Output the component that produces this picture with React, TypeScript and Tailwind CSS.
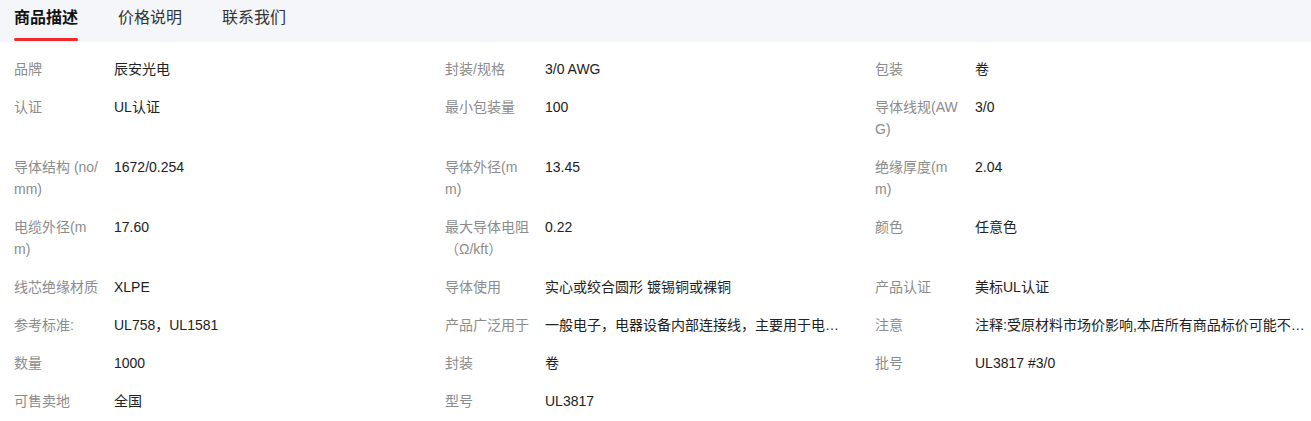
import React from "react";

type Item = { label: string; value: string };

const rows: Item[][] = [
  [
    { label: "品牌", value: "辰安光电" },
    { label: "封装/规格", value: "3/0 AWG" },
    { label: "包装", value: "卷" },
  ],
  [
    { label: "认证", value: "UL认证" },
    { label: "最小包装量", value: "100" },
    { label: "导体线规(AW\nG)", value: "3/0" },
  ],
  [
    { label: "导体结构 (no/\nmm)", value: "1672/0.254" },
    { label: "导体外径(m\nm)", value: "13.45" },
    { label: "绝缘厚度(m\nm)", value: "2.04" },
  ],
  [
    { label: "电缆外径(m\nm)", value: "17.60" },
    { label: "最大导体电阻\n（Ω/kft）", value: "0.22" },
    { label: "颜色", value: "任意色" },
  ],
  [
    { label: "线芯绝缘材质", value: "XLPE" },
    { label: "导体使用", value: "实心或绞合圆形 镀锡铜或裸铜" },
    { label: "产品认证", value: "美标UL认证" },
  ],
  [
    { label: "参考标准:", value: "UL758，UL1581" },
    { label: "产品广泛用于", value: "一般电子，电器设备内部连接线，主要用于电…" },
    { label: "注意", value: "注释:受原材料市场价影响,本店所有商品标价可能不…" },
  ],
  [
    { label: "数量", value: "1000" },
    { label: "封装", value: "卷" },
    { label: "批号", value: "UL3817 #3/0" },
  ],
  [
    { label: "可售卖地", value: "全国" },
    { label: "型号", value: "UL3817" },
  ],
];

const tabs = ["商品描述", "价格说明", "联系我们"];

export default function App() {
  return (
    <div
      className="w-[1311px] h-[421px] bg-white overflow-hidden"
      style={{ fontFamily: '"Liberation Sans", "Noto Sans CJK SC", sans-serif' }}
    >
      <div className="h-[42px] bg-[#f5f6fa] flex items-start gap-10 pl-[14px]">
        {tabs.map((t, i) => (
          <div key={t} className="relative h-[42px] pt-[6px]">
            <span
              className={
                "text-[16px] leading-[24px] " +
                (i === 0 ? "font-bold text-[#111111]" : "text-[#333333]")
              }
            >
              {t}
            </span>
            {i === 0 && (
              <div className="absolute left-0 right-0 bottom-[1px] h-[3px] rounded-full bg-[#f42a2a]" />
            )}
          </div>
        ))}
      </div>
      <div className="pt-2 pl-[14px] grid grid-cols-[431px_430px_1fr] text-[14px] leading-[22px]">
        {rows.map((row, ri) =>
          [0, 1, 2].map((ci) => {
            const item = row[ci];
            return (
              <div key={ri + "-" + ci} className="flex py-2">
                {item && (
                  <>
                    <div className="w-[100px] shrink-0 pr-3 text-[#8c8c8c] whitespace-pre-line">
                      {item.label}
                    </div>
                    <div className="text-[#222222] whitespace-nowrap">{item.value}</div>
                  </>
                )}
              </div>
            );
          })
        )}
      </div>
    </div>
  );
}
